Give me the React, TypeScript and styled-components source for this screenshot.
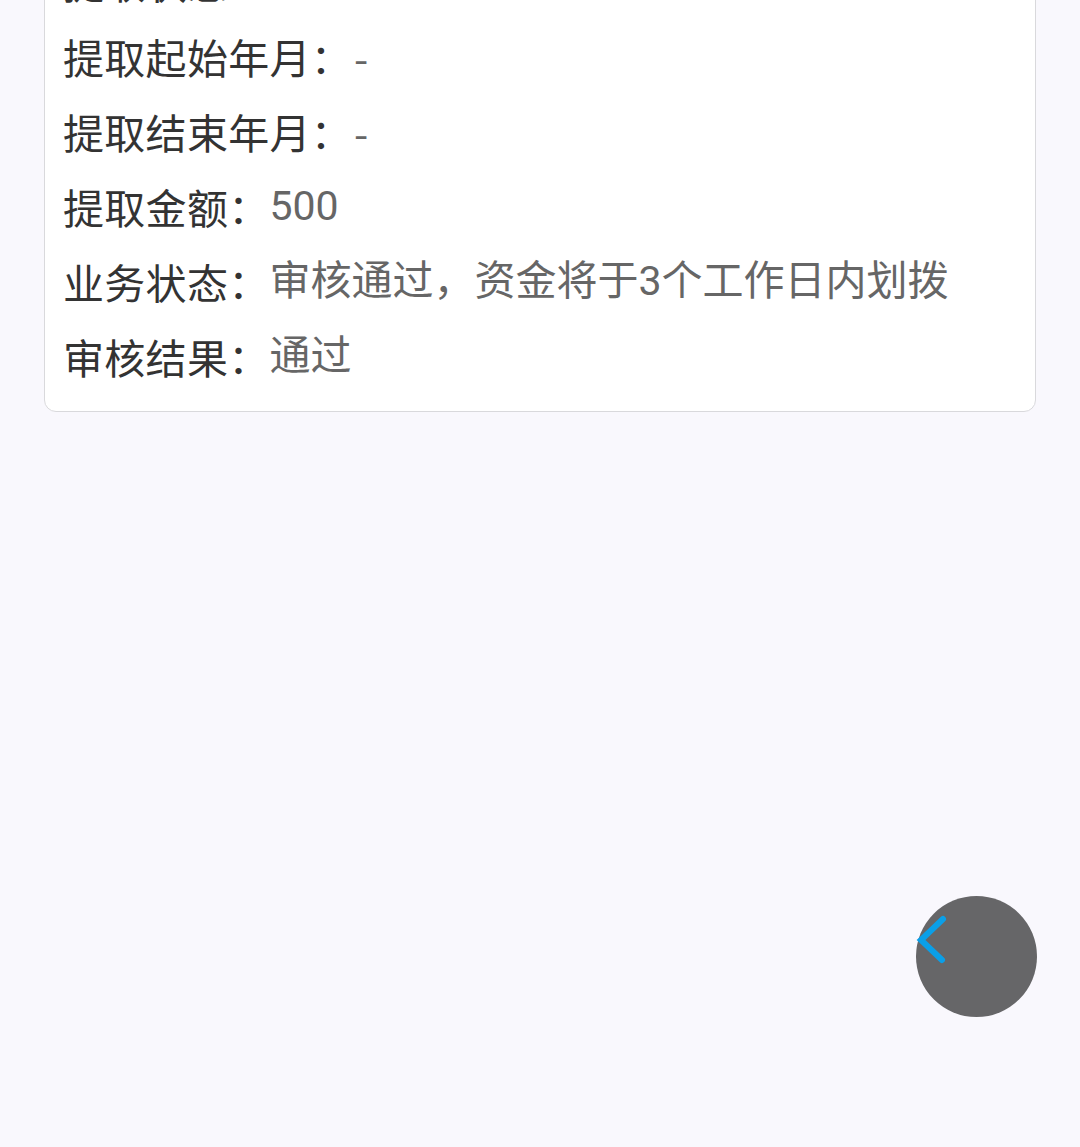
import React from "react";
import styled, { createGlobalStyle } from "styled-components";

const Global = createGlobalStyle`
  html, body {
    margin: 0;
    padding: 0;
    background: #f9f8fd;
    font-family: "Noto Sans CJK SC", "Noto Sans", sans-serif;
  }
`;

const Page = styled.div`
  min-height: 1147px;
  padding: 0 44px;
  overflow: hidden;
`;

const Card = styled.div`
  margin-top: -74px;
  background: #ffffff;
  border: 1px solid #d9d9dc;
  border-radius: 12px;
  padding: 17px 18px 17px 18px;
  display: flex;
  flex-direction: column;
`;

const Row = styled.div`
  display: flex;
  align-items: center;
  height: 75px;
  font-size: 41px;
  line-height: 75px;
  white-space: nowrap;
`;

const Label = styled.span`
  color: #333333;
  letter-spacing: 0.3px;
`;

const Value = styled.span<{ $dash?: boolean }>`
  color: #666666;
  font-family: ${(p) =>
    p.$dash ? `"Noto Sans CJK SC", sans-serif` : `"Roboto", "Noto Sans CJK SC", sans-serif`};
  ${(p) => (p.$dash ? "padding-left: 2px;" : "")}
`;

const BackButton = styled.button`
  position: fixed;
  right: 43px;
  bottom: 130px;
  width: 121px;
  height: 121px;
  border-radius: 50%;
  border: none;
  padding: 0;
  background: #666668;
  cursor: pointer;
`;

const Chevron = styled.svg`
  position: absolute;
  left: 0;
  top: 0;
`;

const rows: [string, string][] = [
  ["提取状态：", "已提取"],
  ["提取起始年月：", "-"],
  ["提取结束年月：", "-"],
  ["提取金额：", "500"],
  ["业务状态：", "审核通过，资金将于3个工作日内划拨"],
  ["审核结果：", "通过"],
];

export default function App() {
  return (
    <>
      <Global />
      <Page>
        <Card>
          {rows.map(([l, v], i) => (
            <Row key={i}>
              <Label>{l}</Label>
              <Value $dash={v === "-"}>{v}</Value>
            </Row>
          ))}
        </Card>
      </Page>
      <BackButton aria-label="返回">
        <Chevron width="121" height="121" viewBox="0 0 121 121">
          <path
            d="M27 23 L5 44 L26 64"
            fill="none"
            stroke="#0a9fe8"
            strokeWidth="6"
            strokeLinecap="round"
            strokeLinejoin="miter"
          />
        </Chevron>
      </BackButton>
    </>
  );
}
